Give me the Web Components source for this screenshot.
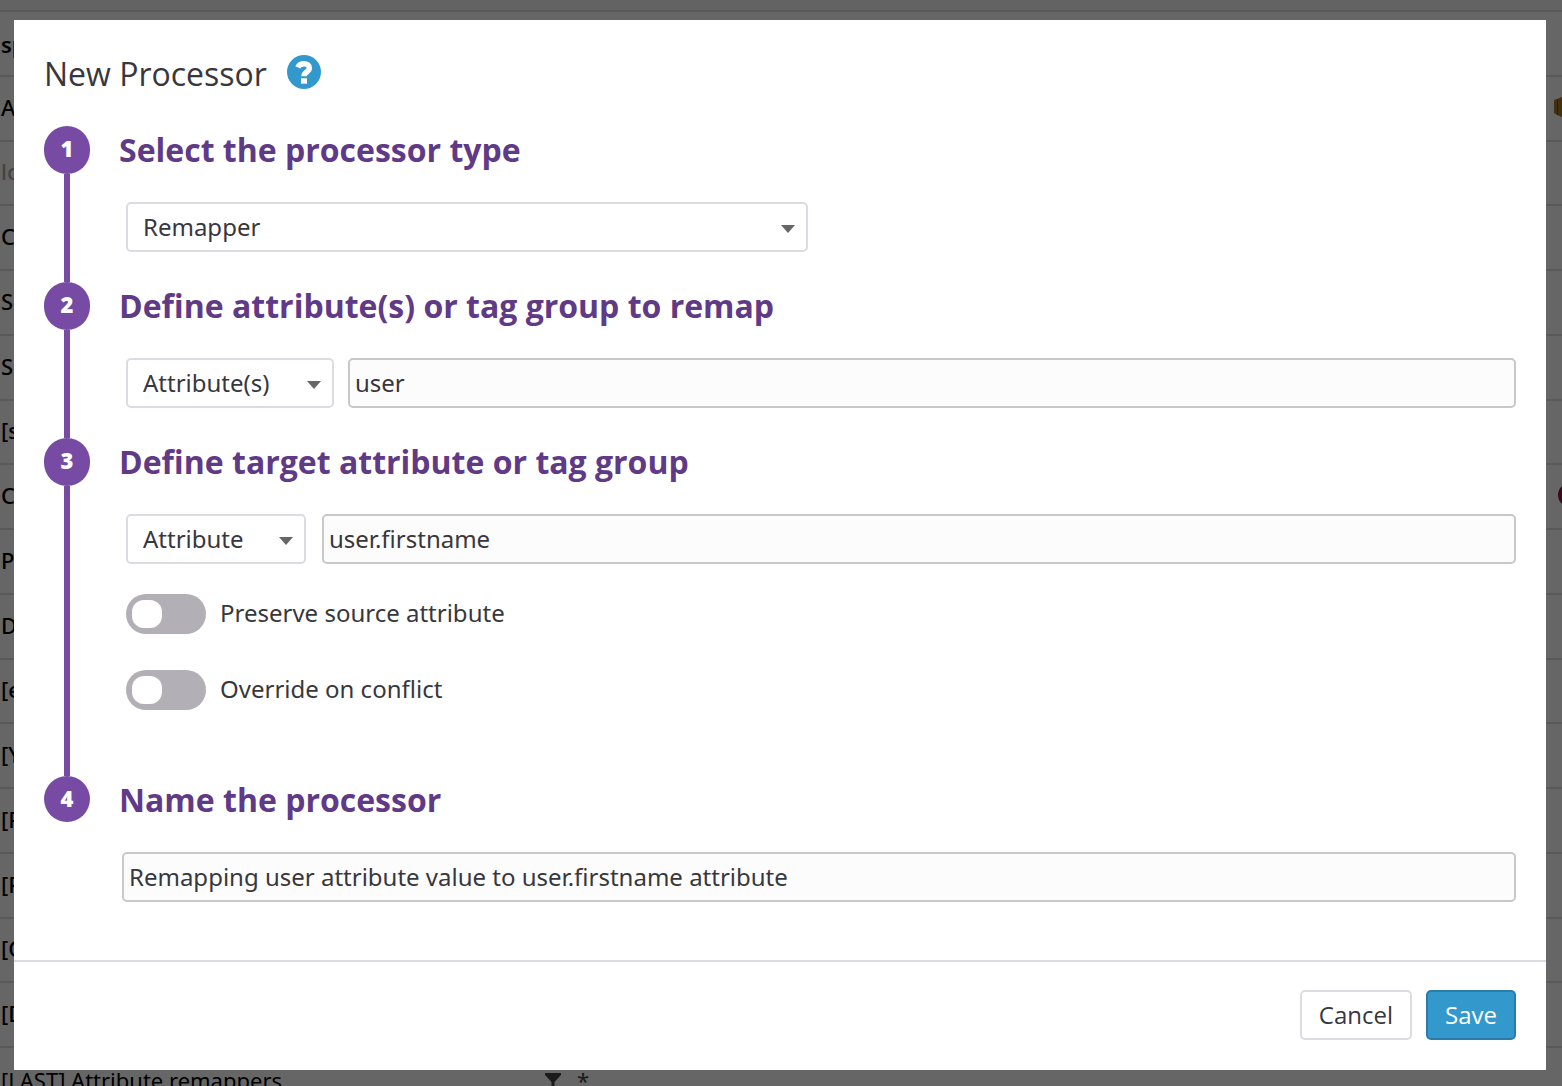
<!DOCTYPE html>
<html lang="en">
<head>
<meta charset="utf-8">
<title>New Processor</title>
<style>
  html, body { margin: 0; height: 100%; }
  body {
    overflow: hidden;
    background: #fff;
    color: #38373c;
    font: 24px/32px "Noto Sans", "Open Sans", sans-serif;
  }
</style>
</head>
<body>
<pipeline-list>
  <pipeline-row heading>sp</pipeline-row>
  <pipeline-row>A<svg slot="end" width="8" height="20" viewBox="0 0 8 20"><path d="M0 3l3-1 5-2v20l-5-2-3-2z" fill="#a07a28"/><path d="M3.5 2v16" stroke="#6b4d13"/></svg></pipeline-row>
  <pipeline-row muted>lo</pipeline-row>
  <pipeline-row>C</pipeline-row>
  <pipeline-row>Se</pipeline-row>
  <pipeline-row>S</pipeline-row>
  <pipeline-row>[s</pipeline-row>
  <pipeline-row>C<svg slot="end" width="4" height="24" viewBox="0 0 4 24"><circle cx="12" cy="12" r="9" fill="none" stroke="#a3124f" stroke-width="6"/></svg></pipeline-row>
  <pipeline-row>Po</pipeline-row>
  <pipeline-row>D</pipeline-row>
  <pipeline-row>[e</pipeline-row>
  <pipeline-row>[Y</pipeline-row>
  <pipeline-row>[F</pipeline-row>
  <pipeline-row>[F</pipeline-row>
  <pipeline-row>[C</pipeline-row>
  <pipeline-row>[D</pipeline-row>
  <pipeline-row last>[LAST] Attribute remappers
    <svg slot="filter" width="16" height="20" viewBox="0 0 16 20"><path d="M0 3h16v2L9.500 12v7h-3v-7L0 5z" fill="#444"/></svg>
    <span slot="filter">*</span>
  </pipeline-row>
</pipeline-list>

<modal-dialog heading="New Processor">
  <step-item number="1" heading="Select the processor type">
    <select-box label="Processor type" value="Remapper" width="682"></select-box>
  </step-item>
  <step-item number="2" heading="Define attribute(s) or tag group to remap">
    <field-row>
      <select-box label="Source kind" value="Attribute(s)" width="208"></select-box>
      <text-box label="Source attributes" value="user"></text-box>
    </field-row>
  </step-item>
  <step-item number="3" heading="Define target attribute or tag group" roomy>
    <field-row loose>
      <select-box label="Target kind" value="Attribute" width="180"></select-box>
      <text-box label="Target attribute" value="user.firstname"></text-box>
    </field-row>
    <toggle-switch>Preserve source attribute</toggle-switch>
    <toggle-switch>Override on conflict</toggle-switch>
  </step-item>
  <step-item number="4" heading="Name the processor" last>
    <text-box label="Processor name" value="Remapping user attribute value to user.firstname attribute"></text-box>
  </step-item>
  <action-button slot="actions">Cancel</action-button>
  <action-button slot="actions" primary>Save</action-button>
</modal-dialog>

<script>
const define = (name, render) => customElements.define(name, class extends HTMLElement {
  connectedCallback() {
    if (this.shadowRoot) return;
    this.attachShadow({ mode: "open" }).innerHTML =
      "<style>*{box-sizing:border-box}:host{box-sizing:border-box}</style>" + render(this);
  }
});
const attr = (el, name) => el.getAttribute(name) || "";

define("pipeline-list", () => `
  <style>
    :host { display: grid; height: 100vh; padding-top: 12px; overflow: hidden;
      grid-template-rows: repeat(16, 1fr) 38px; box-shadow: inset 0 12px #f7f7f7; }
  </style><slot></slot>`);

define("pipeline-row", () => `
  <style>
    :host { display: flex; align-items: center; justify-content: space-between; min-height: 0;
      padding: 0 0 5px 1px; border-top: 2px solid #dedede; margin-top: -2px; color: #000;
      font-size: 22px; font-weight: 500; white-space: nowrap; }
    :host([heading]) { font-weight: 600; padding-bottom: 0; }
    :host([muted]) { color: #aaa; }
    :host([last]) { height: 66px; display: grid; grid-template-columns: 544px auto; justify-content: start;
      padding-bottom: 0; font-weight: 400; }
    div { display: flex; align-items: center; gap: 16px; color: #444; }
    ::slotted(svg) { display: block; }
  </style><span><slot></slot></span><div><slot name="filter"></slot><slot name="end"></slot></div>`);

define("modal-dialog", el => `
  <style>
    :host { position: fixed; inset: 0; padding: 20px 16px 16px 14px; background: rgba(0, 0, 0, .6); }
    section { background: #fff; }
    header { display: flex; align-items: center; gap: 20px; padding: 32px 30px 30px; }
    h1 { margin: 0; font: 400 32px/44px "Open Sans", sans-serif; }
    .help { display: block; padding: 0; border: 0; background: none; margin-bottom: 4px; height: 34px; }
    svg { display: block; }
    main { display: block; padding: 0 30px 58px; }
    footer { display: flex; justify-content: flex-end; gap: 14px; padding: 28px 30px 30px; border-top: 2px solid #dcdbe2; }
  </style>
  <section role="dialog" aria-modal="true" aria-labelledby="title">
    <header>
      <h1 id="title">${attr(el, "heading")}</h1>
      <button class="help" aria-label="Help">
        <svg width="34" height="34" viewBox="0 0 34 34">
          <circle cx="17" cy="17" r="17" fill="#3398cc"/>
          <path d="M10.800 12.400C12 9.800 14.500 8.800 17 8.800c3.200 0 5.300 1.700 5.300 4.200 0 4.200-5.300 3.900-5.300 8.300" fill="none" stroke="#fff" stroke-width="5.500"/>
          <path d="M14 23.300h6v5.400h-6z" fill="#fff"/>
        </svg>
      </button>
    </header>
    <main><slot></slot></main>
    <footer><slot name="actions"></slot></footer>
  </section>`);

define("step-item", el => `
  <style>
    :host { display: grid; grid-template-columns: 46px 1fr; column-gap: 29px; }
    .rail { display: flex; flex-direction: column; align-items: center; }
    .badge { width: 46px; height: 48px; border-radius: 23px; background: #774aa4; color: #fff;
      display: grid; place-items: center; padding-bottom: 4px; font: 800 22px/30px "Open Sans", sans-serif; }
    .line { flex: 1; width: 6px; background: #774aa4; }
    h2 { margin: 0 0 28px; font: 700 32px/48px "Open Sans", sans-serif; color: #5f3a87; }
    .body { display: flex; flex-direction: column; gap: 30px; padding: 0 0 30px 7px; }
    :host([roomy]) .body { padding-bottom: 66px; }
    :host([last]) .body { padding: 0 0 0 3px; }
    :host([last]) .badge { height: 46px; padding-bottom: 2px; }
    :host([last]) .line { display: none; }
  </style>
  <div class="rail"><span class="badge">${attr(el, "number")}</span><span class="line"></span></div>
  <div><h2>${attr(el, "heading")}</h2><div class="body"><slot></slot></div></div>`);

define("field-row", () => `
  <style>
    :host { display: flex; gap: 14px; }
    :host([loose]) { gap: 16px; }
  </style><slot></slot>`);

define("select-box", el => `
  <style>
    :host { display: grid; align-items: center; width: ${attr(el, "width")}px; max-width: 100%; flex: none; }
    select, svg { grid-area: 1 / 1; }
    select { appearance: none; width: 100%; height: 50px; margin: 0; padding: 0 40px 0 15px; font: inherit;
      color: inherit; background: #fff; border: 2px solid #dcdbe2; border-radius: 5px; }
    svg { justify-self: end; margin: 4px 13px 0 0; pointer-events: none; }
  </style>
  <select aria-label="${attr(el, "label")}"><option>${attr(el, "value")}</option></select>
  <svg width="14" height="8" viewBox="0 0 14 8"><path d="M0 0h14L7 8z" fill="#666"/></svg>`);

define("text-box", el => `
  <style>
    :host { display: block; flex: 1; min-width: 0; }
    input { display: block; width: 100%; height: 50px; margin: 0; padding: 0 5px 2px; font: inherit; color: inherit;
      background: #fcfcfc; border: 2px solid #c8c8c8; border-radius: 5px; }
  </style>
  <input type="text" aria-label="${attr(el, "label")}" value="${attr(el, "value")}">`);

define("toggle-switch", () => `
  <style>
    :host { display: block; }
    :host(:last-child) { margin-top: 6px; }
    label { display: flex; width: fit-content; align-items: center; gap: 14px; height: 40px; }
    span { padding-bottom: 2px; }
    input { appearance: none; width: 80px; height: 40px; margin: 0; padding: 6px; border-radius: 20px; background: #b2b0b6; }
    input::before { content: ""; display: block; width: 30px; height: 28px; border-radius: 12px; background: #fff; }
    input:checked { background: #774aa4; }
    input:checked::before { margin-left: auto; }
  </style>
  <label><input type="checkbox" role="switch"><span><slot></slot></span></label>`);

define("action-button", () => `
  <style>
    :host { display: block; }
    button { height: 50px; padding: 0 17px; font: 400 24px/32px "Open Sans", sans-serif; color: #38373c;
      background: #fff; border: 2px solid #dcdbe2; border-radius: 5px; }
    :host([primary]) button { color: #fff; background: #3398cc; border-color: #2a7cab; font-weight: 500; }
  </style>
  <button type="button"><slot></slot></button>`);
</script>
</body>
</html>
